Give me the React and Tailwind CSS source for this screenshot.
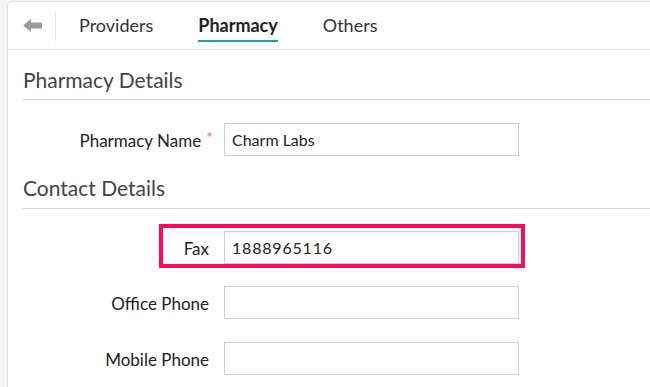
export default function App() {
  const font = { fontFamily: 'Lato, "Open Sans", sans-serif' };
  const Row = ({ label, value, required, highlight, mt, valueClass = "" }) => (
    <div className={`relative flex items-center ${mt}`}>
      {highlight && (
        <div className="absolute left-[136px] top-[-7px] w-[366px] h-[44px] border-4 border-[#ff0a5a] pointer-events-none" />
      )}
      <div className="w-[186px] pt-[2px] flex justify-end items-center text-[17px] text-[#222]">
        <span>{label}</span>
        {required ? <span className="ml-[5px] mr-[-4px] text-[#f07070] text-[16px] leading-none -mt-[8px]">*</span> : null}
      </div>
      <div className={`ml-[15px] w-[295px] h-[33px] border border-[#cfcfcf] bg-white flex items-center px-[7px] text-[16px] text-[#222] ${valueClass}`}>
        {value}
      </div>
    </div>
  );
  return (
    <div className="w-[650px] h-[387px] bg-[#f3f4f8] pl-[7px] pt-[1px] overflow-hidden" style={font}>
      <div className="bg-white border-l border-t border-[#e0e0e0] rounded-tl-[5px] h-full">
        <div className="h-[48px] flex items-center border-b border-[#e3e3e3]">
          <div className="w-[47px] flex justify-center pl-[1px]">
            <svg width="19" height="13" viewBox="0 0 19 13">
              <path d="M0 6.5 L8 0 L8 3.5 L19 3.5 L19 9.5 L8 9.5 L8 13 Z" fill="#9a9a9a" />
            </svg>
          </div>
          <div className="w-px h-[30px] bg-[#e3e3e3]" />
          <div className="flex items-center text-[18px] text-[#333] h-full">
            <div className="ml-[23px] h-full flex items-center">Providers</div>
            <div className="ml-[45px] h-full flex items-center relative font-bold text-[#222]">
              Pharmacy
              <div className="absolute left-0 right-0 bottom-[7px] h-[2px] bg-[#1aa3a0]" />
            </div>
            <div className="ml-[45px] h-full flex items-center">Others</div>
          </div>
        </div>
        <div className="pl-[15px]">
          <div className="h-[50px] flex items-end pb-[4px] border-b border-[#d6d6d6] text-[21px] text-[#444]">
            Pharmacy Details
          </div>
          <Row label="Pharmacy Name" value="Charm Labs" required mt="mt-[23px]" />
          <div className="h-[53px] flex items-end pb-[5px] border-b border-[#d6d6d6] text-[21px] text-[#444]">
            Contact Details
          </div>
          <Row label="Fax" value="1888965116" highlight mt="mt-[22px]" valueClass="tracking-[0.8px]" />
          <Row label="Office Phone" value="" mt="mt-[22px]" />
          <Row label="Mobile Phone" value="" mt="mt-[23px]" />
        </div>
      </div>
    </div>
  );
}
